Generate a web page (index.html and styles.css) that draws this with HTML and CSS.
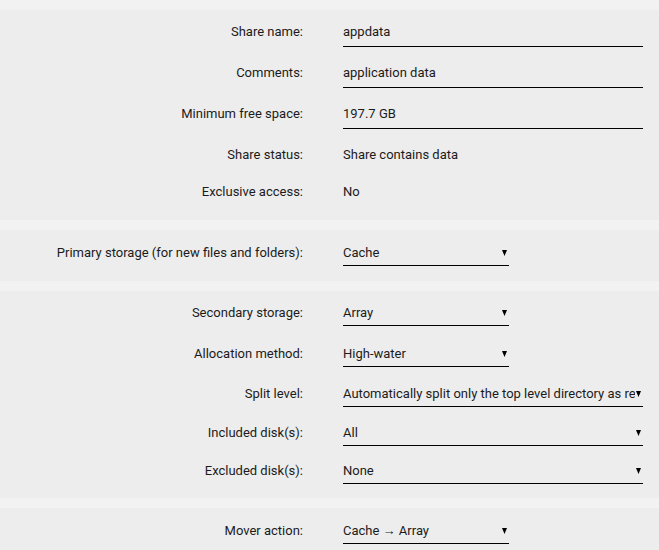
FILE: index.html
```html
<!DOCTYPE html>
<html>
<head>
<meta charset="utf-8">
<link rel="stylesheet" href="styles.css">
</head>
<body>
<div class="page">
  <section class="panel panel-main">
    <div class="row row-input">
      <div class="label">Share name:</div>
      <div class="field input wide">appdata</div>
    </div>
    <div class="row row-input">
      <div class="label">Comments:</div>
      <div class="field input wide">application data</div>
    </div>
    <div class="row row-input">
      <div class="label">Minimum free space:</div>
      <div class="field input wide">197.7 GB</div>
    </div>
    <div class="row row-status">
      <div class="label">Share status:</div>
      <div class="field plain">Share contains data</div>
    </div>
    <div class="row row-status">
      <div class="label">Exclusive access:</div>
      <div class="field plain">No</div>
    </div>
  </section>

  <section class="panel panel-single">
    <div class="row">
      <div class="label">Primary storage (for new files and folders):</div>
      <div class="field select narrow"><span class="val">Cache</span><svg class="arrow" width="5" height="6" viewBox="0 0 5 6"><polygon points="0,0 5,0 2.5,6"/></svg></div>
    </div>
  </section>

  <section class="panel panel-multi">
    <div class="row r41">
      <div class="label">Secondary storage:</div>
      <div class="field select narrow"><span class="val">Array</span><svg class="arrow" width="5" height="6" viewBox="0 0 5 6"><polygon points="0,0 5,0 2.5,6"/></svg></div>
    </div>
    <div class="row r40">
      <div class="label">Allocation method:</div>
      <div class="field select narrow"><span class="val">High-water</span><svg class="arrow" width="5" height="6" viewBox="0 0 5 6"><polygon points="0,0 5,0 2.5,6"/></svg></div>
    </div>
    <div class="row r39">
      <div class="label">Split level:</div>
      <div class="field select wide"><span class="val">Automatically split only the top level directory as required</span><svg class="arrow" width="5" height="6" viewBox="0 0 5 6"><polygon points="0,0 5,0 2.5,6"/></svg></div>
    </div>
    <div class="row r38">
      <div class="label">Included disk(s):</div>
      <div class="field select wide"><span class="val">All</span><svg class="arrow" width="5" height="6" viewBox="0 0 5 6"><polygon points="0,0 5,0 2.5,6"/></svg></div>
    </div>
    <div class="row">
      <div class="label">Excluded disk(s):</div>
      <div class="field select wide"><span class="val">None</span><svg class="arrow" width="5" height="6" viewBox="0 0 5 6"><polygon points="0,0 5,0 2.5,6"/></svg></div>
    </div>
  </section>

  <section class="panel panel-single">
    <div class="row">
      <div class="label">Mover action:</div>
      <div class="field select narrow"><span class="val">Cache → Array</span><svg class="arrow" width="5" height="6" viewBox="0 0 5 6"><polygon points="0,0 5,0 2.5,6"/></svg></div>
    </div>
  </section>
</div>
</body>
</html>
```

FILE: styles.css
```css
html, body {
  margin: 0;
  padding: 0;
}
body {
  background: #f2f2f2;
  font-family: Roboto, "Liberation Sans", sans-serif;
  font-size: 13px;
  color: #1c1b1b;
}
.page {
  padding-top: 10px;
  display: flex;
  flex-direction: column;
  gap: 10px;
}
.panel {
  background: #ededed;
}
.panel-main {
  padding-bottom: 13px;
}
.panel-single {
  padding-top: 1px;
  padding-bottom: 15px;
}
.panel-multi {
  padding-bottom: 14px;
}
.row {
  display: flex;
  align-items: flex-start;
}
.row-input { height: 41px; }
.row-status { height: 37px; }
.r41 { height: 41px; }
.r40 { height: 40px; }
.r39 { height: 39px; }
.r38 { height: 38px; }
.label {
  width: 303px;
  flex: none;
  text-align: right;
  padding-top: 12px;
  line-height: 20px;
  white-space: nowrap;
}
.field {
  margin-left: 40px;
  padding-top: 12px;
  line-height: 20px;
  white-space: nowrap;
}
.input {
  padding-bottom: 4px;
  border-bottom: 1px solid #000;
}
.select {
  padding-bottom: 2px;
  border-bottom: 1px solid #000;
  display: flex;
  align-items: center;
}
.wide { width: 300px; }
.narrow { width: 166px; }
.val {
  flex: 1;
  overflow: hidden;
  white-space: nowrap;
  text-overflow: clip;
}
.arrow {
  flex: none;
  margin-left: 1px;
  margin-right: 2px;
  fill: #000;
}
```
